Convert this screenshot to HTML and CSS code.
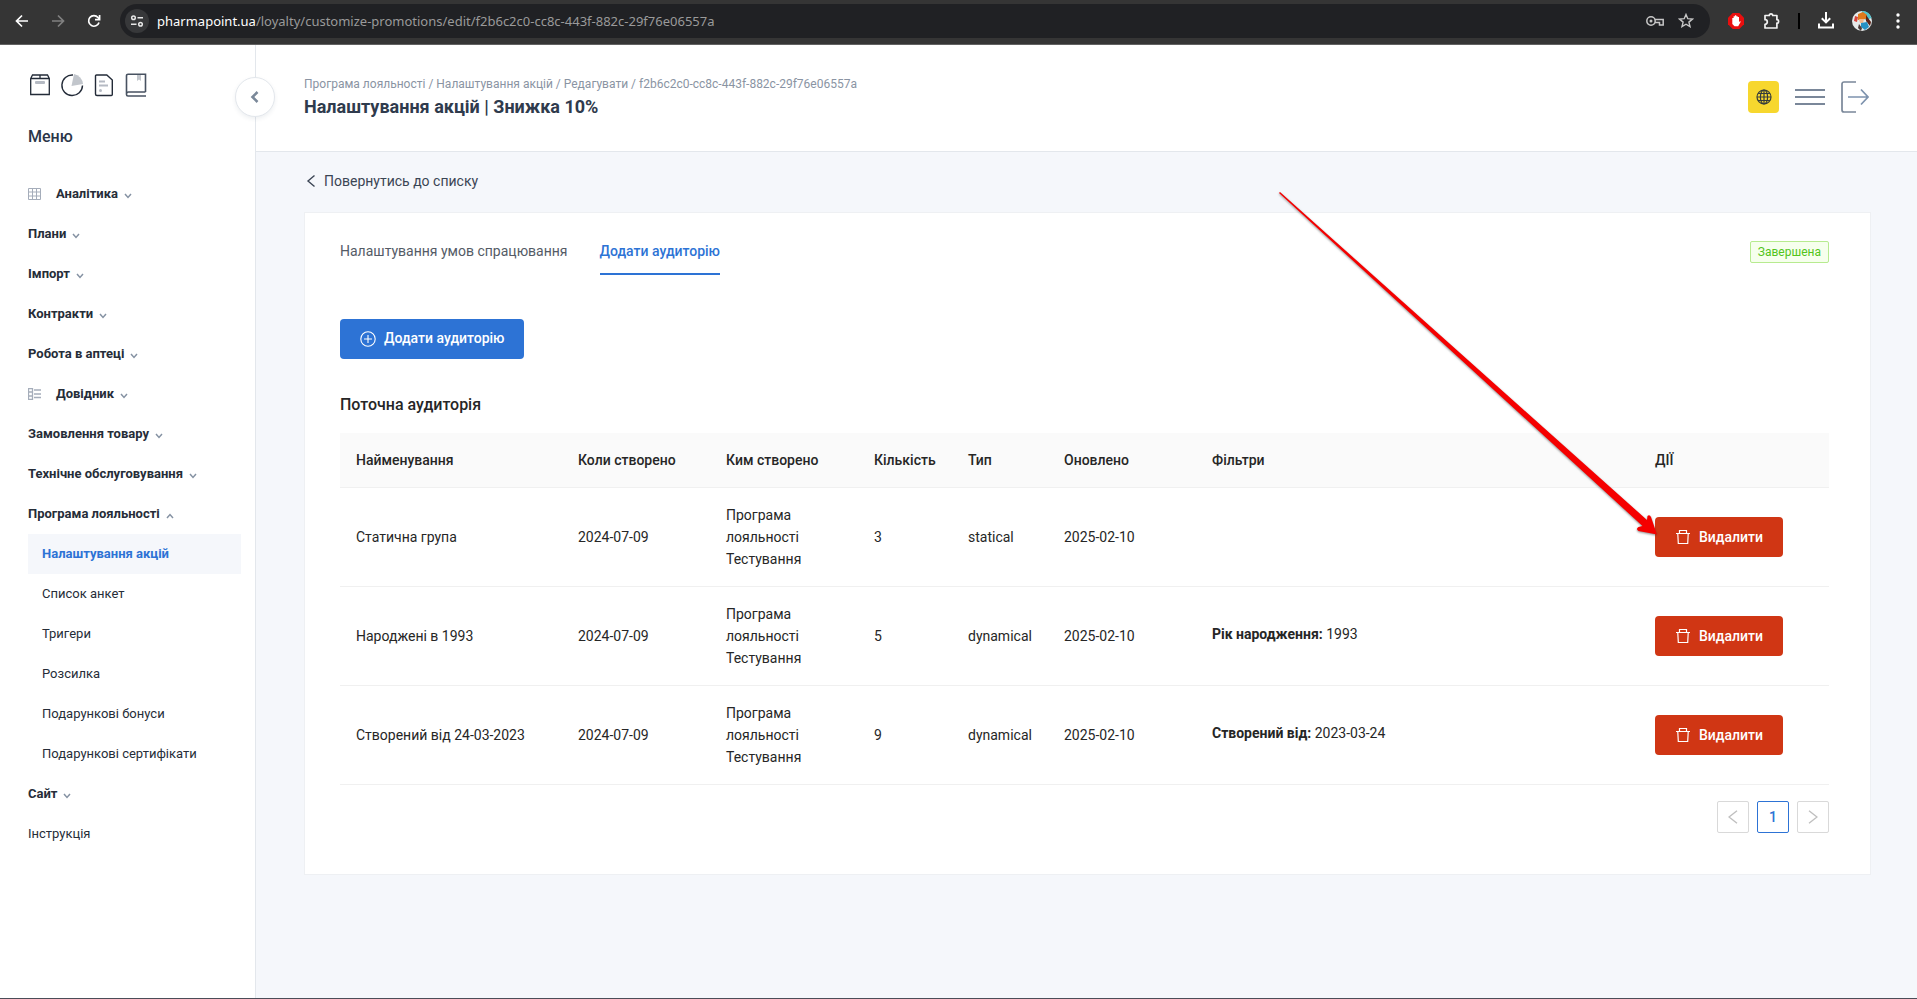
FILE: index.html
```html
<!DOCTYPE html>
<html lang="uk">
<head>
<meta charset="utf-8">
<title>Налаштування акцій | Знижка 10%</title>
<link rel="stylesheet" href="styles.css">
</head>
<body>
<svg class="sprite" aria-hidden="true">
  <symbol id="chev" viewBox="0 0 8 6"><path d="M1 1l3 3.4L7 1" fill="none" stroke="#8592a3" stroke-width="1.5"/></symbol>
  <symbol id="trash" viewBox="0 0 16 16"><path d="M1 4.500h14M4.500 4V1.500h7V4M2.800 5l.5 9.500h9.400l.5-9.500" fill="none" stroke="#fff" stroke-width="1.200"/></symbol>
</svg>
<div class="browser">
  <button class="nav" aria-label="Назад"><svg width="14" height="14" viewBox="0 0 14 14"><path d="M13 7H2M7 1.500L1.500 7 7 12.500" fill="none" stroke="#fff" stroke-width="1.700"/></svg></button>
  <button class="nav" aria-label="Вперед"><svg width="14" height="14" viewBox="0 0 14 14"><path d="M1 7h11M7 1.500L12.500 7 7 12.500" fill="none" stroke="#808080" stroke-width="1.700"/></svg></button>
  <button class="nav" aria-label="Оновити"><svg width="14" height="14" viewBox="0 0 14 14"><path d="M12 8.500A5.300 5.300 0 1 1 11 3.500L12.500 5M12.600 1v4.600H8" fill="none" stroke="#fff" stroke-width="1.700"/></svg></button>
  <div class="omnibox">
    <button class="site" aria-label="Про сайт"><svg width="14" height="12" viewBox="0 0 14 12"><g fill="none" stroke="#e8e8e8" stroke-width="1.500"><circle cx="3.500" cy="2.800" r="1.800"/><path d="M7.500 2.800H13M1 9.200h5.500"/><circle cx="10.500" cy="9.200" r="1.800"/></g></svg></button>
    <div class="url"><span class="host">pharmapoint.ua</span>/loyalty/customize-promotions/edit/f2b6c2c0-cc8c-443f-882c-29f76e06557a</div>
    <button class="bar-icon" aria-label="Паролі"><svg width="18" height="12" viewBox="0 0 18 12"><g fill="none" stroke="#c7c7c7" stroke-width="1.500"><circle cx="5" cy="6" r="4.200"/><path d="M9 4.500h8.200V10h-3.700V7.500H9"/></g><circle cx="5" cy="6" r="1.500" fill="#c7c7c7"/></svg></button>
    <button class="bar-icon" aria-label="Закладка"><svg width="16" height="15" viewBox="0 0 16 15"><path d="M8 1.500l1.800 4.200 4.600.4-3.500 3 1.100 4.500L8 11.200l-4 2.400 1.100-4.500-3.500-3 4.600-.4z" fill="none" stroke="#c7c7c7" stroke-width="1.400"/></svg></button>
  </div>
  <div class="extensions">
    <button class="ext" aria-label="Блокувальник"><svg width="16" height="16" viewBox="0 0 16 16"><path d="M4.700 0h6.600L16 4.700v6.600L11.300 16H4.700L0 11.300V4.700z" fill="#e90e0e"/><path d="M4.300 8.500V5h1.300V3.200h1.300v-.9h1.400v.9h1.400V4H11v5.200l1-1.200.7.700-2.500 4.600H6.500L4.300 11z" fill="#fff"/></svg></button>
    <button class="ext" aria-label="Розширення"><svg width="18" height="18" viewBox="0 0 18 18"><path d="M3 3.500h4.300a1.700 1.700 0 0 1 3.400 0h4.200v4.200a1.700 1.700 0 0 1 0 3.400V16H3v-3.700a2.300 2.300 0 0 0 0-4.600z" fill="none" stroke="#f2f2f2" stroke-width="1.700" stroke-linejoin="round"/></svg></button>
    <span class="divider"></span>
    <button class="ext" aria-label="Завантаження"><svg width="16" height="17" viewBox="0 0 16 17"><path d="M8 0v10M3.800 6.200L8 10.400l4.200-4.200M1 11.500V15.500h14v-4" fill="none" stroke="#fff" stroke-width="2"/></svg></button>
    <button class="ext" aria-label="Профіль"><svg width="20" height="20" viewBox="0 0 20 20"><circle cx="10" cy="10" r="10" fill="#e5eaea"/><path d="M10 0a10 10 0 0 1 9.500 7L14 9 9 6z" fill="#4fc3ce"/><path d="M6 3l5-2 4 3-1 4-8 1z" fill="#e07a1c"/><path d="M14 4l5 7-1 4-4-5z" fill="#5d2418"/><path d="M7 8h5l-1 4H8z" fill="#f2b78c"/><path d="M9 12l6-1 2 5-4 3-4-3z" fill="#2691c4"/><path d="M3 5l3 1-1 5-3-1z" fill="#d7433b"/><path d="M7 13l3 4-1 3-3-3z" fill="#4b3a37"/></svg></button>
    <button class="ext dots" aria-label="Меню браузера"><svg width="4" height="16" viewBox="0 0 4 16"><g fill="#fff"><circle cx="2" cy="2" r="1.700"/><circle cx="2" cy="8" r="1.700"/><circle cx="2" cy="14" r="1.700"/></g></svg></button>
  </div>
</div>

<div class="app">
  <aside class="sidebar">
    <div class="shortcuts">
      <a href="#" aria-label="Архів"><svg width="24" height="24" viewBox="0 0 24 24"><g fill="none" stroke="#232b38" stroke-width="1.300"><path d="M2.700 5.500L4.500 2h15l1.800 3.500V21.500H2.700zM2.700 5.500h18.600M12 2v3.500"/></g><rect x="7" y="8" width="10" height="3" rx="1" fill="#b5bac3"/></svg></a>
      <a href="#" aria-label="Статистика"><svg width="24" height="24" viewBox="0 0 24 24"><path d="M14 1l-2.500 12L23 11A11 11 0 0 0 14 1z" fill="#c2c6cc"/><path d="M13 2A10.300 10.300 0 1 0 22.500 12.500" fill="none" stroke="#232b38" stroke-width="1.400"/></svg></a>
      <a href="#" aria-label="Документи"><svg width="24" height="24" viewBox="0 0 24 24"><path d="M4.500 2h10.300l5.500 5v14.500a1 1 0 0 1-1 1H5a1.500 1.500 0 0 1-1.500-1.500V3a1 1 0 0 1 1-1z" fill="none" stroke="#232b38" stroke-width="1.400"/><path d="M7 8.500h6M7 12.500h9" stroke="#b5bac3" stroke-width="2"/><circle cx="8.500" cy="17.500" r="1.500" fill="#b5bac3"/></svg></a>
      <a href="#" aria-label="Довідка"><svg width="24" height="24" viewBox="0 0 24 24"><path d="M21.500 19V1.200H4A1.500 1.500 0 0 0 2.500 2.700V21.500a1.500 1.500 0 0 0 1.500 1.500h18M21.500 19H4.500a2 2 0 0 0-2 2" fill="none" stroke="#485261" stroke-width="1.600"/><path d="M13 2v6l2-1.600L17 8V2z" fill="#c2c6cc"/></svg></a>
    </div>
    <h2 class="menu-title">Меню</h2>
    <nav>
      <ul class="menu">
        <li><a href="#"><svg class="lead" width="13" height="12" viewBox="0 0 13 12"><path d="M.5.5h12v11H.5zM.5 4h12M.5 8h12M4.500.5v11M8.500.5v11" fill="none" stroke="#a5adba"/></svg>Аналітика<svg class="chev"><use href="#chev"/></svg></a></li>
        <li><a href="#">Плани<svg class="chev"><use href="#chev"/></svg></a></li>
        <li><a href="#">Імпорт<svg class="chev"><use href="#chev"/></svg></a></li>
        <li><a href="#">Контракти<svg class="chev"><use href="#chev"/></svg></a></li>
        <li><a href="#">Робота в аптеці<svg class="chev"><use href="#chev"/></svg></a></li>
        <li><a href="#"><svg class="lead" width="13" height="12" viewBox="0 0 13 12"><path d="M.5.5h4v11h-4zM.5 4h4M.5 8h4M6 2h7M6 6h7M6 9.500h7" fill="none" stroke="#a5adba" stroke-width="1.300"/></svg>Довідник<svg class="chev"><use href="#chev"/></svg></a></li>
        <li><a href="#">Замовлення товару<svg class="chev"><use href="#chev"/></svg></a></li>
        <li><a href="#">Технічне обслуговування<svg class="chev"><use href="#chev"/></svg></a></li>
        <li><a href="#">Програма лояльності<svg class="chev up"><use href="#chev"/></svg></a>
          <ul class="submenu">
            <li><a href="#" class="current">Налаштування акцій</a></li>
            <li><a href="#">Список анкет</a></li>
            <li><a href="#">Тригери</a></li>
            <li><a href="#">Розсилка</a></li>
            <li><a href="#">Подарункові бонуси</a></li>
            <li><a href="#">Подарункові сертифікати</a></li>
          </ul>
        </li>
        <li><a href="#">Сайт<svg class="chev"><use href="#chev"/></svg></a></li>
        <li><a href="#" class="plain">Інструкція</a></li>
      </ul>
    </nav>
    <button class="collapse" aria-label="Згорнути меню"><svg width="10" height="12" viewBox="0 0 10 12"><path d="M7.500 1L2.500 6l5 5" fill="none" stroke="#7a8899" stroke-width="2.600"/></svg></button>
  </aside>

  <div class="content">
    <header class="header">
      <div>
        <div class="crumbs">Програма лояльності / Налаштування акцій / Редагувати / f2b6c2c0-cc8c-443f-882c-29f76e06557a</div>
        <h1>Налаштування акцій | Знижка 10%</h1>
      </div>
      <div class="actions">
        <button class="lang" aria-label="Мова"><svg width="16" height="16" viewBox="0 0 16 16"><g fill="none" stroke="#343b3c" stroke-width="1.200"><circle cx="8" cy="8" r="7"/><ellipse cx="8" cy="8" rx="3.600" ry="7"/><path d="M8 1v14M1 8h14M2.200 4.500h11.600M2.200 11.500h11.600"/></g></svg></button>
        <button aria-label="Меню"><svg width="30" height="18" viewBox="0 0 30 18"><path d="M0 2h30M0 9h30M0 16h30" stroke="#7a8799" stroke-width="2"/></svg></button>
        <button aria-label="Вийти"><svg width="28" height="32" viewBox="0 0 28 32"><g fill="none" stroke="#7a8799" stroke-width="1.700"><path d="M15 1H3a2 2 0 0 0-2 2v26a2 2 0 0 0 2 2h12"/><path d="M7 16h20M20 8.500l7 7.500-7 7.500" stroke="#7e93ae"/></g></svg></button>
      </div>
    </header>

    <main>
      <a href="#" class="back"><svg width="10" height="14" viewBox="0 0 10 14"><path d="M8.500 1.500L2 7l6.500 5.500" fill="none" stroke="#3b4554" stroke-width="1.400"/></svg>Повернутись до списку</a>
      <section class="card">
        <div class="top">
          <nav class="tabs">
            <a href="#">Налаштування умов спрацювання</a>
            <a href="#" class="active">Додати аудиторію</a>
          </nav>
          <span class="tag">Завершена</span>
        </div>
        <button class="btn add"><svg width="16" height="18" viewBox="0 0 16 18"><g fill="none" stroke="#fff" stroke-width="1.100"><circle cx="8" cy="10" r="7.200"/><path d="M8 6v8M4 10h8"/></g></svg>Додати аудиторію</button>
        <h2 class="section-title">Поточна аудиторія</h2>
        <table>
          <colgroup><col class="c-name"><col class="c-date"><col class="c-date"><col class="c-count"><col class="c-type"><col class="c-date"><col><col class="c-act"></colgroup>
          <thead>
            <tr><th>Найменування</th><th>Коли створено</th><th>Ким створено</th><th>Кількість</th><th>Тип</th><th>Оновлено</th><th>Фільтри</th><th>ДІЇ</th></tr>
          </thead>
          <tbody>
            <tr><td>Статична група</td><td>2024-07-09</td><td>Програма лояльності Тестування</td><td>3</td><td>statical</td><td>2025-02-10</td><td></td><td><button class="btn delete"><svg width="16" height="16"><use href="#trash"/></svg>Видалити</button></td></tr>
            <tr><td>Народжені в 1993</td><td>2024-07-09</td><td>Програма лояльності Тестування</td><td>5</td><td>dynamical</td><td>2025-02-10</td><td><p class="filter"><strong>Рік народження:</strong> 1993</p></td><td><button class="btn delete"><svg width="16" height="16"><use href="#trash"/></svg>Видалити</button></td></tr>
            <tr><td>Створений від 24-03-2023</td><td>2024-07-09</td><td>Програма лояльності Тестування</td><td>9</td><td>dynamical</td><td>2025-02-10</td><td><p class="filter"><strong>Створений від:</strong> 2023-03-24</p></td><td><button class="btn delete"><svg width="16" height="16"><use href="#trash"/></svg>Видалити</button></td></tr>
          </tbody>
        </table>
        <div class="pager">
          <button aria-label="Попередня"><svg width="10" height="14" viewBox="0 0 10 14"><path d="M9 .7L1 7l8 6.300" fill="none" stroke="#bfbfbf" stroke-width="1.400"/></svg></button>
          <button class="on">1</button>
          <button aria-label="Наступна"><svg width="10" height="14" viewBox="0 0 10 14"><path d="M1 .7L9 7l-8 6.300" fill="none" stroke="#bfbfbf" stroke-width="1.400"/></svg></button>
        </div>
      </section>
    </main>
  </div>
</div>
<svg class="pointer" width="380" height="348" viewBox="0 0 380 348" aria-hidden="true"><path d="M1 0L368 328l.5-4q2-2 3.500 1l6 17.500-18.500-3.500q-3-2 0-4l4-1L0 1z" fill="#f50000"/></svg>
</body>
</html>
```
FILE: styles.css
```css
* { box-sizing: border-box; }

body {
  margin: 0;
  min-height: 100vh;
  display: flex;
  flex-direction: column;
  position: relative;
  background: #f5f7fb;
  border-bottom: 1px solid #4b4d58;
  color: #262626;
  font: 14px/22px Roboto, "Noto Sans", sans-serif;
}

a { color: inherit; text-decoration: none; }
button { margin: 0; padding: 0; border: 0; background: none; font: inherit; color: inherit; display: flex; align-items: center; justify-content: center; }
svg { display: block; flex: none; }
h1, h2, p, ul { margin: 0; padding: 0; }
ul { list-style: none; }
.sprite { position: absolute; width: 0; height: 0; }

/* Browser toolbar */
.browser {
  display: flex;
  align-items: center;
  height: 45px;
  padding: 0 11px 3px 4px;
  background: #353535;
  border-bottom: 1px solid #626262;
}
.nav { width: 36px; height: 34px; }
.omnibox {
  flex: 1;
  display: flex;
  align-items: center;
  gap: 14px;
  height: 34px;
  margin-left: 8px;
  padding: 0 16px 0 5px;
  border-radius: 17px;
  background: #202124;
}
.site { width: 24px; height: 24px; border-radius: 50%; background: #37383a; }
.url { flex: 1; margin-left: -6px; font: 13px/20px "Noto Sans", "Open Sans", sans-serif; color: #9a9a9a; white-space: nowrap; }
.host { color: #fff; }
.extensions { display: flex; align-items: center; gap: 18px; margin-left: 18px; }
.ext { min-width: 16px; height: 24px; }
.divider { width: 2px; height: 16px; background: #000; }
.dots { width: 16px; }

/* Application frame */
.app { flex: 1; display: flex; }
.sidebar {
  position: relative;
  flex: none;
  width: 256px;
  padding: 28px 14px 0 28px;
  background: #fff;
  border-right: 1px solid #e3e7ec;
  color: #262d38;
}
.shortcuts { display: flex; gap: 8px; }
.menu-title { margin-top: 28px; font-size: 16px; line-height: 24px; font-weight: 500; color: #2b3648; }
.menu { margin-top: 25px; font-size: 13px; }
.menu a { display: flex; align-items: center; height: 40px; font-weight: 700; }
.menu a.plain, .submenu a { font-weight: 400; }
.submenu a { padding-left: 14px; }
.menu a.current { background: #f5f7fb; color: #2d73d5; font-weight: 700; }
.lead { margin-right: 15px; }
.chev { width: 8px; height: 6px; margin: 3px 0 0 6px; }
.chev.up { transform: rotate(180deg); }
.collapse {
  position: absolute;
  top: 32px;
  right: -20px;
  width: 40px;
  height: 40px;
  border: 1px solid #e3e7ec;
  border-radius: 50%;
  background: #fff;
  box-shadow: 0 2px 4px rgba(40, 60, 90, 0.08);
}

.content { flex: 1; min-width: 0; }
.header {
  display: flex;
  justify-content: space-between;
  align-items: center;
  height: 107px;
  padding: 0 48px 2px;
  background: #fff;
  border-bottom: 1px solid #e3e7ec;
}
.crumbs { font-size: 12px; line-height: 20px; color: #8a94a3; }
.header h1 { font-size: 18px; line-height: 26px; font-weight: 700; color: #2f3b4d; }
.actions { display: flex; align-items: center; gap: 16px; }
.lang { width: 31px; height: 32px; border-radius: 4px; background: #f7d72e; }

main { padding: 18px 46px 48px 48px; }
.back { display: inline-flex; align-items: center; gap: 8px; padding-left: 2px; color: #3b4554; }
.card { margin-top: 18px; padding: 17px 41px 41px 35px; background: #fff; border: 1px solid #eef0f3; }
.top { display: flex; justify-content: space-between; align-items: flex-start; }
.tabs { display: flex; gap: 32px; color: #545b66; }
.tabs a { padding: 10px 0 11px; border-bottom: 2px solid transparent; }
.tabs a.active { color: #2d73d5; border-color: #2d73d5; font-weight: 500; }
.tag { margin-top: 11px; padding: 0 7px; border: 1px solid #b7eb8f; border-radius: 2px; background: #f6ffed; color: #52c41a; font-size: 12px; line-height: 20px; }
.btn { height: 40px; border-radius: 4px; color: #fff; font-weight: 500; }
.add { gap: 8px; margin-top: 44px; padding: 0 20px 2px; background: #2d73d5; }
.section-title { margin: 34px 0 16px; font-size: 16px; line-height: 24px; font-weight: 500; }

table { width: 100%; table-layout: fixed; border-collapse: separate; border-spacing: 0; }
.c-name { width: 222px; }
.c-date { width: 148px; }
.c-count { width: 94px; }
.c-type { width: 96px; }
.c-act { width: 190px; }
th, td { padding: 16px; text-align: left; border-bottom: 1px solid #f0f0f0; }
th { background: #fafafa; font-weight: 500; }
.filter { padding-bottom: 4px; }
.delete { gap: 8px; width: 128px; background: #d03614; }

.pager { display: flex; justify-content: flex-end; gap: 8px; margin-top: 16px; }
.pager button { width: 32px; height: 32px; border: 1px solid #d9d9d9; border-radius: 2px; }
.pager button.on { border-color: #2d73d5; color: #2d73d5; font-weight: 500; }

/* Annotation arrow laid over the page */
.pointer { position: absolute; top: 192px; right: 258px; pointer-events: none; filter: drop-shadow(0 1px 1px rgba(60, 60, 60, 0.6)); }
```
